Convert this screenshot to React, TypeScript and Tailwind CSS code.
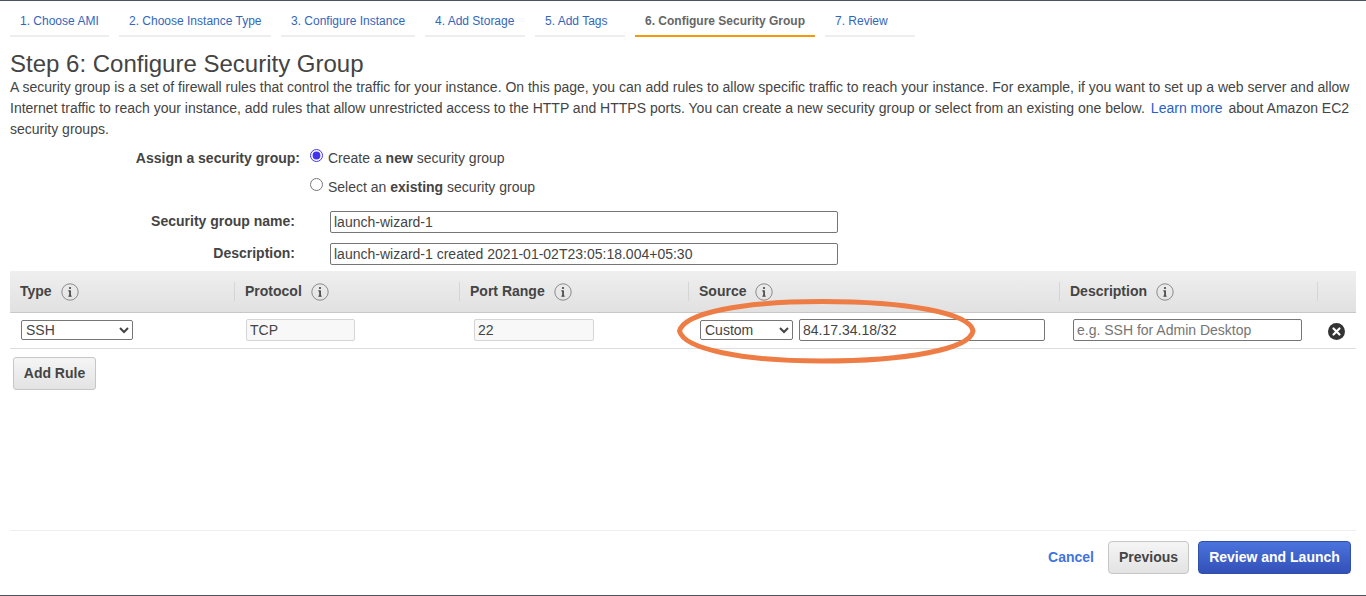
import React from "react";

const tabs = [
  { label: "1. Choose AMI", w: "w-[99px]" },
  { label: "2. Choose Instance Type", w: "w-[152px]" },
  { label: "3. Configure Instance", w: "w-[134px]" },
  { label: "4. Add Storage", w: "w-[100px]" },
  { label: "5. Add Tags", w: "w-[90px]" },
  { label: "6. Configure Security Group", w: "w-[180px]", active: true },
  { label: "7. Review", w: "w-[90px]" },
];

function Info() {
  return (
    <svg width="18" height="18" viewBox="0 0 18 18" className="ml-[6px] shrink-0">
      <circle cx="9" cy="9" r="8.2" fill="none" stroke="#8a8a8a" strokeWidth="1" />
      <rect x="8.2" y="7.4" width="1.7" height="6" fill="#444" />
      <rect x="7.2" y="7.4" width="1.7" height="1" fill="#444" />
      <rect x="7.2" y="12.7" width="3.6" height="0.9" fill="#444" />
      <circle cx="9" cy="5" r="1.1" fill="#444" />
    </svg>
  );
}

function Th({ label, w, pl = "pl-[10px]", sep = true }: { label?: string; w: string; pl?: string; sep?: boolean }) {
  return (
    <div className={`${w} ${pl} h-[19px] flex items-center ${sep ? "border-l border-[#d5d5d5]" : ""}`}>
      {label && <span className="font-bold text-[14px] text-[#444]">{label}</span>}
      {label && <span className="ml-[3px]"><Info /></span>}
    </div>
  );
}

export default function App() {
  return (
    <div className="h-[596px] w-[1366px] overflow-hidden relative bg-white border-t border-b border-[#4d5160] text-[#444] text-[14px] font-['Liberation_Sans',Arial,sans-serif]">
      <div className="flex gap-[10px] pl-[10px] pt-[12px]">
        {tabs.map((t) => (
          <div
            key={t.label}
            className={`${t.w} h-[24px] pl-[10px] text-[12px] leading-[16px] border-b-[2px] ${
              t.active ? "border-[#f49a0a] font-bold text-[#666]" : "border-[#eeeeee] text-[#3366bb]"
            }`}
          >
            {t.label}
          </div>
        ))}
      </div>

      <div className="px-[10px]">
        <h1 className="text-[24px] leading-[28px] mt-[13px] text-[#444]">Step 6: Configure Security Group</h1>
        <p className="text-[14px] leading-[21px] mt-[-1px] w-[1346px]">
          A security group is a set of firewall rules that control the traffic for your instance. On this page, you can add rules to allow specific traffic to reach your instance. For example, if you want to set up a web server and allow Internet traffic to reach your instance, add rules that allow unrestricted access to the HTTP and HTTPS ports. You can create a new security group or select from an existing one below.
          <a className="text-[#2a5fc4] mx-[6px]">Learn more</a>
          about Amazon EC2 security groups.
        </p>

        <div className="flex mt-[8px] h-[29px]">
          <div className="w-[290px] text-right font-bold leading-[21px]">Assign a security group:</div>
          <label className="flex items-start ml-[10px]">
            <input type="radio" name="sg" defaultChecked className="w-[13px] h-[13px] mt-[1px] accent-[#4433ee]" />
            <span className="ml-[5px] leading-[21px]">Create a <b>new</b> security group</span>
          </label>
        </div>
        <div className="flex h-[34px]">
          <label className="flex items-start ml-[300px]">
            <input type="radio" name="sg" className="w-[13px] h-[13px] mt-[1px]" />
            <span className="ml-[5px] leading-[21px]">Select an <b>existing</b> security group</span>
          </label>
        </div>

        <div className="flex h-[32px] items-start">
          <div className="w-[285px] text-right font-bold leading-[21px]">Security group name:</div>
          <input
            defaultValue="launch-wizard-1"
            className="ml-[35px] w-[508px] h-[22px] border border-[#767676] rounded-[2px] px-[3px] text-[14px] text-[#444] outline-none"
          />
        </div>
        <div className="flex h-[28px] items-start">
          <div className="w-[285px] text-right font-bold leading-[21px]">Description:</div>
          <input
            defaultValue="launch-wizard-1 created 2021-01-02T23:05:18.004+05:30"
            className="ml-[35px] w-[508px] h-[22px] border border-[#767676] rounded-[2px] px-[3px] text-[14px] text-[#444] outline-none"
          />
        </div>

        {/* table */}
        <div className="flex items-center h-[42px] bg-gradient-to-b from-[#efefef] to-[#e1e1e1] border-b border-[#c8c8c8]">
          <Th label="Type" w="w-[224px]" sep={false} />
          <Th label="Protocol" w="w-[225px]" />
          <Th label="Port Range" w="w-[229px]" />
          <Th label="Source" w="w-[371px]" />
          <Th label="Description" w="w-[258px]" />
          <Th w="w-[39px]" />
        </div>
        <div className="flex items-center h-[36px] pb-[2px] border-b border-[#dddddd]">
          <div className="w-[224px] pl-[11px]">
            <select className="block w-[112px] h-[20px] border border-[#767676] rounded-[2px] bg-white text-[14px] text-[#444] leading-none">
              <option>SSH</option>
            </select>
          </div>
          <div className="w-[225px] pl-[12px]">
            <input readOnly value="TCP" className="block w-[109px] h-[22px] border border-[#d5d5d5] rounded-[2px] bg-[#f8f8f8] px-[3px] text-[14px] text-[#444] outline-none" />
          </div>
          <div className="w-[229px] pl-[15px]">
            <input readOnly value="22" className="block w-[120px] h-[22px] border border-[#d5d5d5] rounded-[2px] bg-[#f8f8f8] px-[3px] text-[14px] text-[#444] outline-none" />
          </div>
          <div className="w-[371px] pl-[12px] flex items-center">
            <select className="block w-[93px] h-[20px] border border-[#767676] rounded-[2px] bg-white text-[14px] text-[#444] leading-none">
              <option>Custom</option>
            </select>
            <input defaultValue="84.17.34.18/32" className="block ml-[6px] w-[246px] h-[22px] border border-[#767676] rounded-[2px] bg-white px-[3px] text-[14px] text-[#444] outline-none" />
          </div>
          <div className="w-[258px] pl-[14px]">
            <input placeholder="e.g. SSH for Admin Desktop" className="block w-[229px] h-[22px] border border-[#767676] rounded-[2px] bg-white px-[3px] text-[14px] text-[#444] outline-none placeholder:text-[#757575]" />
          </div>
          <div className="w-[39px] pl-[11px] pt-[3px]">
            <svg width="17" height="17" viewBox="0 0 17 17" className="block">
              <circle cx="8.5" cy="8.5" r="8.5" fill="#333333" />
              <path d="M5.5 5.5L11.5 11.5M11.5 5.5L5.5 11.5" stroke="#fff" strokeWidth="2.2" strokeLinecap="round" />
            </svg>
          </div>
        </div>

        <button className="block ml-[3px] mt-[8px] w-[83px] h-[33px] rounded-[3px] border border-[#c6c6c6] bg-gradient-to-b from-[#f5f5f5] to-[#e3e3e3] font-bold text-[14px] text-[#444]">
          Add Rule
        </button>

        <div className="mt-[140px] border-t border-[#eeeeee] flex justify-end items-center pt-[10px] pr-[5px]">
          <a className="font-bold text-[14px] text-[#3f74de] mr-[14px]">Cancel</a>
          <button className="w-[81px] h-[33px] rounded-[4px] border border-[#c6c6c6] bg-gradient-to-b from-[#f5f5f5] to-[#e3e3e3] font-bold text-[14px] text-[#444]">
            Previous
          </button>
          <button className="ml-[9px] w-[153px] h-[33px] rounded-[4px] border border-[#2f4fa8] bg-gradient-to-b from-[#4a74dc] to-[#3350b8] font-bold text-[14px] text-white">
            Review and Launch
          </button>
        </div>
      </div>

      <svg width="310" height="76" viewBox="0 0 310 76" className="absolute left-[672px] top-[292px] pointer-events-none">
        <path
          d="M7.5 38 C12 20 70 8.5 150 8.5 C235 8.5 298 20 301 38 C298 56 235 68 150 68 C70 68 12 56 7.5 38 Z"
          fill="none"
          stroke="#ed7d45"
          strokeWidth="5"
        />
      </svg>
    </div>
  );
}
